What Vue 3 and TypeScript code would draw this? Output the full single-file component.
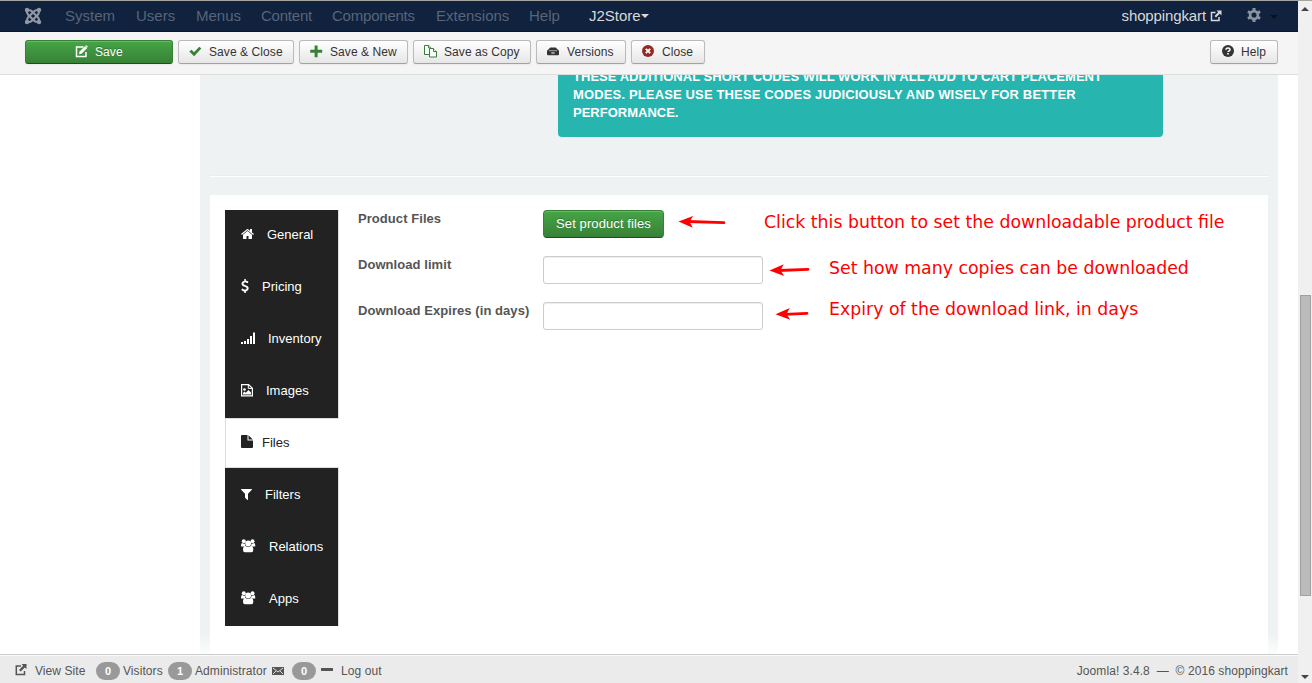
<script setup lang="ts">
interface MenuItem {
  label: string
  step: number
  tight?: boolean
}
interface ToolButton {
  label: string
  icon: string
  width: number
}
interface Tab {
  label: string
  icon: string
  active?: boolean
}
interface Callout {
  text: string
  x: number
  y: number
  tip: [number, number]
  tail: [number, number]
}

const menus: MenuItem[] = [
  { label: 'System', step: 71 },
  { label: 'Users', step: 60 },
  { label: 'Menus', step: 65 },
  { label: 'Content', step: 71, tight: true },
  { label: 'Components', step: 104, tight: true },
  { label: 'Extensions', step: 93 },
  { label: 'Help', step: 60 },
]

const tools: ToolButton[] = [
  { label: 'Save', icon: 'edit', width: 148 },
  { label: 'Save & Close', icon: 'check', width: 116 },
  { label: 'Save & New', icon: 'plus', width: 109 },
  { label: 'Save as Copy', icon: 'copy', width: 118 },
  { label: 'Versions', icon: 'archive', width: 90 },
  { label: 'Close', icon: 'cancel', width: 74 },
]

const tabs: Tab[] = [
  { label: 'General', icon: 'home' },
  { label: 'Pricing', icon: 'dollar' },
  { label: 'Inventory', icon: 'signal' },
  { label: 'Images', icon: 'image' },
  { label: 'Files', icon: 'file', active: true },
  { label: 'Filters', icon: 'filter' },
  { label: 'Relations', icon: 'group' },
  { label: 'Apps', icon: 'group' },
]

const callouts: Callout[] = [
  { text: 'Click this button to set the downloadable product file', x: 764, y: 228, tip: [678.5, 221.5], tail: [724, 222.7] },
  { text: 'Set how many copies can be downloaded', x: 829, y: 274, tip: [769.5, 270.5], tail: [808, 269.4] },
  { text: 'Expiry of the download link, in days', x: 829, y: 315, tip: [775.5, 314.3], tail: [807, 313.3] },
]

function headTransform(c: Callout): string {
  const angle = (Math.atan2(c.tail[1] - c.tip[1], c.tail[0] - c.tip[0]) * 180) / Math.PI
  return `translate(${c.tip[0]} ${c.tip[1]}) rotate(${angle})`
}
</script>

<template>
  <div class="screen">
    <div class="page">
      <header class="navbar">
        <svg class="brand" width="18" height="18" viewBox="0 0 18 18">
          <g fill="none" stroke="#9299a5" stroke-width="2.1">
            <path d="M3.200 14.500V12.500q0-1.300 1-2.300l6-6q1.800-1.800 4.500-1" />
            <path d="M14.800 3.500V5.500q0 1.300-1 2.300l-6 6q-1.800 1.800-4.500 1" />
            <path d="M3.500 3.200H5.500q1.300 0 2.300 1l6 6q1.800 1.800 1 4.500" />
            <path d="M14.500 14.800H12.500q-1.300 0-2.300-1l-6-6q-1.800-1.800-1-4.500" />
          </g>
          <g fill="#9299a5">
            <circle cx="3" cy="3" r="2.200" /><circle cx="15" cy="3" r="2.200" />
            <circle cx="3" cy="15" r="2.200" /><circle cx="15" cy="15" r="2.200" />
          </g>
        </svg>
        <nav class="menus">
          <span v-for="m in menus" :key="m.label" :class="{ tight: m.tight }" :style="{ width: m.step + 'px' }">{{ m.label }}</span>
        </nav>
        <span class="store">J2Store<i class="caret"></i></span>
        <span class="site">shoppingkart</span>
        <svg class="site-icon" width="12" height="12" viewBox="0 0 12 12">
          <path d="M5.500 2.500H1.500v8h7.500V7" fill="none" stroke="#d5d8dd" stroke-width="1.500" />
          <path d="M6.500 .5H11.500V5.500L9.800 3.800 6 7.600 4.500 6.100 8.200 2.300Z" fill="#d5d8dd" />
        </svg>
        <svg class="gear" width="14" height="14" viewBox="0 0 14 14">
          <circle cx="7" cy="7" r="3.900" fill="none" stroke="#8c93a0" stroke-width="2.700" />
          <path d="M7 0v2.500M7 11.500V14M.9 3.500l2.200 1.200M10.900 9.300l2.200 1.200M.9 10.500l2.200-1.200M10.900 4.700l2.200-1.200" stroke="#8c93a0" stroke-width="3" />
        </svg>
        <i class="caret dark"></i>
      </header>

      <div class="toolbar">
        <button v-for="t in tools" :key="t.label" class="tool" :class="t.icon" :style="{ width: t.width + 'px' }">
          <svg width="14" height="14" viewBox="0 0 14 14">
            <g v-if="t.icon === 'edit'">
              <path d="M8.500 2H1.500v9.500h9.500V7" fill="none" stroke="#fff" stroke-width="1.500" />
              <path d="M4 9.300l.6-2.700L10.200 1l2 2-5.600 5.700Z" fill="#fff" />
              <path d="M10.600.7l.7-.6 1.600 1.700-.7.700Z" fill="#fff" />
            </g>
            <path v-else-if="t.icon === 'check'" d="M.3 6.600L2.600 4.700 5 7.300 10.300 1.800 12.300 3.600 5.100 11.200Z" fill="#378137" />
            <path v-else-if="t.icon === 'plus'" d="M4.600 .6h3v4.200h4.600v3H7.600v4.400h-3V7.800H.2v-3h4.400Z" fill="#378137" />
            <g v-else-if="t.icon === 'copy'" fill="#fff" stroke="#378137">
              <path d="M.5 .5h4.200l2.300 2.300v6.700H.5Z" />
              <path d="M4.600 .5v2.400H7" />
              <path d="M5.500 3.500h4l3 3v5.500h-7Z" />
              <path d="M9.500 3.500v3h3" />
            </g>
            <g v-else-if="t.icon === 'archive'" fill="#333">
              <path d="M3.400 2.500h5.200l3.400 3.300H0Z" />
              <rect x="0" y="5.200" width="12" height="5" rx="1" />
              <path d="M2 5.700h8" stroke="#aaa" stroke-width=".9" />
              <path d="M4.300 8h3.400" stroke="#fff" />
            </g>
            <g v-else>
              <circle cx="6" cy="6" r="6" fill="#942a25" />
              <path d="M3.800 3.800l4.400 4.400M8.200 3.800L3.800 8.200" stroke="#fff" stroke-width="1.900" />
            </g>
          </svg>
          <span>{{ t.label }}</span>
        </button>
        <button class="tool help">
          <svg width="14" height="14" viewBox="0 0 14 14">
            <circle cx="6" cy="6" r="6" fill="#333" />
            <path d="M3.900 4.700q.1-1.800 2.100-1.800t2.100 1.600q0 1-1.200 1.500-.8.300-.8 1.100" fill="none" stroke="#fff" stroke-width="1.500" />
            <rect x="5.200" y="8" width="1.600" height="1.500" fill="#fff" />
          </svg>
          <span>Help</span>
        </button>
      </div>

      <main class="content">
        <section class="panel">
          <div class="alert">
            <span class="line first">THESE ADDITIONAL SHORT CODES WILL WORK IN ALL ADD TO CART PLACEMENT</span>
            <span class="line second">MODES. PLEASE USE THESE CODES JUDICIOUSLY AND WISELY FOR BETTER</span>
            <span class="line">PERFORMANCE.</span>
          </div>
          <hr />
          <div class="card">
            <ul class="tabs">
              <li v-for="t in tabs" :key="t.label" :class="{ active: t.active }">
                <svg v-if="t.icon === 'home'" width="13" height="14" viewBox="64 0 1664 1792" fill="currentColor">
                  <path d="M1472 992v480q0 26-19 45t-45 19h-384v-384h-256v384h-384q-26 0-45-19t-19-45v-480q0-1 .5-3t.5-3l575-474 575 474q1 2 1 6zm223-69l-62 74q-8 9-21 11h-3q-13 0-21-7l-692-577-692 577q-12 8-24 7-13-2-21-11l-62-74q-8-10-7-23.500t11-21.500l719-599q32-26 76-26t76 26l244 204v-195q0-14 9-23t23-9h192q14 0 23 9t9 23v408l219 182q10 8 11 21.500t-7 23.500z" />
                </svg>
                <svg v-else-if="t.icon === 'dollar'" width="8" height="14" viewBox="384 0 1024 1792" fill="currentColor">
                  <path d="M1362 1185q0 153-99.500 263.500t-258.500 136.500v175q0 14-9 23t-23 9h-135q-13 0-22.500-9.500t-9.500-22.500v-175q-66-9-127.500-31t-101.500-44.500-74-48-46.500-37.500-17.500-18q-17-21-2-41l103-135q7-10 23-12 15-2 24 9l2 2q113 99 243 125 37 8 74 8 81 0 142.500-43t61.500-122q0-28-15-53t-33.500-42-58.500-37.500-66-32-80-32.500q-39-16-61.500-25t-61.500-26.500-62.500-31-56.500-35.500-53.500-42.500-43.500-49-35.500-58-21-66.500-8.500-78q0-138 98-242t255-134v-180q0-13 9.500-22.500t22.500-9.500h135q14 0 23 9t9 23v176q57 6 110.500 23t87 33.500 63.500 37.500 39 29 15 14q17 18 5 38l-81 146q-8 15-23 16-14 3-27-7-3-3-14.500-12t-39-26.500-58.500-32-74.500-26-85.500-11.500q-95 0-155 43t-60 111q0 26 8.500 48t29.500 41.500 39.500 33 56 31 60.500 27 70 27.500q53 20 81 31.500t76 35 75.500 42.500 62 50 53 63.500 31.500 76.500 13 94z" />
                </svg>
                <svg v-else-if="t.icon === 'signal'" width="14" height="14" viewBox="0 0 14 14" fill="currentColor">
                  <path d="M0 11h2v2H0ZM3 10h2v3H3ZM6 8h2v5H6ZM9 5h2v8H9ZM12 1.500h2V13h-2Z" />
                </svg>
                <svg v-else-if="t.icon === 'image'" width="12" height="14" viewBox="0 0 12 14">
                  <path d="M.6 1.600h7l3.800 3.600v7.700H.6Z" fill="none" stroke="currentColor" stroke-width="1.200" />
                  <path d="M7.300 1.600v3.800h4" fill="none" stroke="currentColor" />
                  <circle cx="3.500" cy="6.500" r="1.300" fill="currentColor" />
                  <path d="M2 11.500V10l1.500-1.500 1.300 1.200L7.500 7 10 9.500v2Z" fill="currentColor" />
                </svg>
                <svg v-else-if="t.icon === 'file'" width="12" height="14" viewBox="0 0 12 14" fill="currentColor">
                  <path d="M0 1q0-1 1-1h5.500v5.500H12V12q0 1-1 1H1q-1 0-1-1Z" />
                  <path d="M7.500 .2L11.800 4.500H7.500Z" />
                </svg>
                <svg v-else-if="t.icon === 'filter'" width="11" height="14" viewBox="192 0 1408 1792" fill="currentColor">
                  <path d="M1595 295q17 41-14 70l-493 493v742q0 42-39 59-13 5-25 5-27 0-45-19l-256-256q-19-19-19-45v-486l-493-493q-31-29-14-70 17-39 59-39h1280q42 0 59 39z" />
                </svg>
                <svg v-else width="15" height="14" viewBox="0 0 15 14" fill="currentColor">
                  <circle cx="2.800" cy="2.300" r="2" /><circle cx="11.500" cy="2.300" r="2" />
                  <circle cx="7.150" cy="4.500" r="2.900" />
                  <path d="M0 6.900Q0 4 1.300 4.100q1.500 1 2.500.3 0 1.900 1 3H1.500Q0 7.900 0 6.900ZM14.300 6.900q0-2.900-1.300-2.800-1.500 1-2.500.3 0 1.900-1 3h3.300q1.500.5 1.500-.5Z" />
                  <path d="M2 11q0-4 2.300-3.900 2.850 1.800 5.700 0 2.300-.1 2.300 3.900 0 2.200-2 2.200H4q-2 0-2-2.200Z" />
                </svg>
                <span>{{ t.label }}</span>
              </li>
            </ul>
            <form class="form" @submit.prevent>
              <div class="row">
                <label>Product Files</label>
                <button class="set-files">Set product files</button>
              </div>
              <div class="row">
                <label>Download limit</label>
                <input type="text" />
              </div>
              <div class="row">
                <label>Download Expires (in days)</label>
                <input type="text" />
              </div>
            </form>
          </div>
        </section>
      </main>

      <footer class="status">
        <svg class="view-icon" width="12" height="12" viewBox="0 0 12 12">
          <path d="M6 2H1.300v8.500H9.500V7" fill="none" stroke="#555" stroke-width="1.500" />
          <path d="M6.500 0H11.500V5L9.800 3.500 5.700 7.600 4 5.900 8.100 1.800Z" fill="#555" />
        </svg>
        <span class="view">View Site</span>
        <b class="badge">0</b><span class="visitors">Visitors</span>
        <b class="badge">1</b><span class="admins">Administrator</span>
        <svg class="mail" width="12" height="8" viewBox="0 0 12 8">
          <rect width="12" height="8" fill="#555" />
          <path d="M1 1l5 4 5-4M1 7l3-3M11 7L8 4" fill="none" stroke="#ebebeb" stroke-width=".9" />
        </svg>
        <b class="badge">0</b><i class="minus"></i>
        <span>Log out</span>
        <span class="version">Joomla! 3.4.8 &nbsp;—&nbsp; © 2016 shoppingkart</span>
      </footer>
    </div>

    <aside class="scrollbar">
      <i class="up"></i>
      <div class="thumb"></div>
      <i class="down"></i>
    </aside>

    <svg class="callouts" width="1312" height="683" viewBox="0 0 1312 683">
      <g v-for="c in callouts" :key="c.text">
        <line :x1="c.tip[0] + 9" :y1="c.tip[1]" :x2="c.tail[0]" :y2="c.tail[1]" stroke="#f00" stroke-width="2.800" stroke-linecap="round" />
        <path d="M0 0L14.500-5.800 11 0 14.500 5.800Z" :transform="headTransform(c)" fill="#f00" />
        <text :x="c.x" :y="c.y">{{ c.text }}</text>
      </g>
    </svg>
  </div>
</template>

<style>
body {
  margin: 0;
  overflow: hidden;
}
</style>

<style scoped>
.screen {
  position: relative;
  display: flex;
  box-sizing: border-box;
  width: 1312px;
  height: 683px;
  border-top: 1px solid #a5a5a0;
  background: #fff;
  font: 13px/18px "Liberation Sans", Arial, sans-serif;
  color: #333;
  overflow: hidden;
}
.page {
  display: flex;
  flex-direction: column;
  width: 1298px;
}
.navbar {
  display: flex;
  align-items: center;
  box-sizing: border-box;
  height: 31px;
  padding: 0 20px 0 24px;
  background: #10223e;
  border-bottom: 1px solid #0b182c;
  font-size: 15px;
  line-height: 30px;
  color: #d9d9d9;
}
.brand {
  margin-right: 23px;
  margin-top: -1px;
}
.menus {
  display: flex;
  color: #58647a;
}
.tight {
  letter-spacing: -0.22px;
}
.store {
  display: flex;
  align-items: center;
}
.caret {
  border: 4px solid transparent;
  border-top-color: #d9d9d9;
  border-bottom: 0;
}
.caret.dark {
  margin-left: 9px;
  border-top-color: #07101e;
  margin-top: 2px;
}
.site {
  margin-left: auto;
  letter-spacing: -0.12px;
}
.site-icon {
  margin-left: 4px;
}
.gear {
  margin-left: 25px;
  margin-top: -2px;
}
.toolbar {
  display: flex;
  gap: 5px;
  box-sizing: border-box;
  height: 43px;
  padding: 8px 20px 0 25px;
  background: #f5f5f5;
  border-bottom: 1px solid #ddd;
}
.tool {
  display: flex;
  align-items: center;
  gap: 6px;
  box-sizing: border-box;
  height: 24px;
  margin: 0;
  padding: 0 0 0 10px;
  border: 1px solid #bbb;
  border-bottom-color: #a2a2a2;
  border-radius: 3px;
  background: linear-gradient(#fff, #e6e6e6);
  box-shadow: inset 0 1px 0 rgba(255, 255, 255, 0.2), 0 1px 2px rgba(0, 0, 0, 0.05);
  font: 12px/22px "Liberation Sans", Arial, sans-serif;
  letter-spacing: 0.08px;
  color: #333;
  white-space: nowrap;
}
.tool.edit {
  padding-left: 49px;
  border-color: #378137;
  border-bottom-color: #204b20;
  background: linear-gradient(#46a546, #378137);
  color: #fff;
  text-shadow: 0 -1px 0 rgba(0, 0, 0, 0.25);
}
.tool.help {
  width: 68px;
  padding-left: 11px;
  gap: 5px;
  margin-left: auto;
}
.content {
  height: 579px;
  padding: 0 20px 0 200px;
  overflow: hidden;
}
.panel {
  display: flex;
  flex-direction: column;
  box-sizing: border-box;
  height: 579px;
  padding: 0 10px;
  background: linear-gradient(#eef2f3 558px, #fcfdfd 579px);
}
.alert {
  box-sizing: border-box;
  width: 605px;
  height: 69px;
  margin: -7px 0 39px 348px;
  padding: 0 0 0 15px;
  border-radius: 0 0 4px 4px;
  background: #27b5af;
  color: #fff;
  font-weight: bold;
  white-space: nowrap;
}
.line {
  display: block;
}
.line.first {
  letter-spacing: 0.03px;
}
.line.second {
  letter-spacing: 0.145px;
}
hr {
  width: 100%;
  height: 0;
  margin: 0;
  border: 0;
  border-top: 1px solid #e9edee;
  border-bottom: 1px solid #fff;
  position: relative;
  top: -1px;
}
.card {
  display: flex;
  flex: 1;
  margin-top: 17px;
  padding: 15px;
  background: #fff;
}
.tabs {
  width: 113px;
  height: 416px;
  margin: 0 20px 0 0;
  padding: 0;
  background: #222;
  box-shadow: 1px 0 0 #ddd;
  list-style: none;
  color: #fff;
}
.tabs li {
  display: flex;
  align-items: center;
  gap: 13px;
  box-sizing: border-box;
  height: 52px;
  padding: 0 0 4px 16px;
}
.tabs li span {
  padding-top: 2px;
}
.tabs li.active {
  gap: 9px;
  width: 114px;
  height: 50px;
  margin-bottom: 2px;
  padding: 0 0 2px 15px;
  border: 1px solid #ddd;
  border-right: 0;
  background: #fff;
  color: #222;
}
.form {
  display: flex;
  flex-direction: column;
  gap: 18px;
}
.row {
  display: flex;
  height: 28px;
}
label {
  width: 185px;
  font-weight: bold;
  letter-spacing: 0.06px;
  color: #555;
}
input {
  box-sizing: border-box;
  width: 220px;
  height: 28px;
  border: 1px solid #ccc;
  border-radius: 3px;
  background: #fff;
  box-shadow: inset 0 1px 1px rgba(0, 0, 0, 0.075);
}
.set-files {
  width: 121px;
  height: 28px;
  padding: 0;
  border: 1px solid #378137;
  border-bottom-color: #204b20;
  border-radius: 4px;
  background: linear-gradient(#46a546, #378137);
  box-shadow: inset 0 1px 0 rgba(255, 255, 255, 0.2);
  color: #fff;
  font: 13px/18px "Liberation Sans", Arial, sans-serif;
  letter-spacing: 0.1px;
  text-shadow: 0 -1px 0 rgba(0, 0, 0, 0.25);
}
.status {
  display: flex;
  align-items: center;
  box-sizing: border-box;
  height: 29px;
  padding: 3px 10px 0 15px;
  border-top: 1px solid #ccc;
  background: #ebebeb;
  box-shadow: inset 0 1px 0 #fafafa;
  font-size: 12px;
  letter-spacing: 0.08px;
  color: #555;
  white-space: nowrap;
}
.view-icon {
  margin-right: 8px;
  margin-top: -2px;
}
.view {
  width: 61px;
}
.badge {
  width: 24px;
  height: 18px;
  margin-right: 3px;
  border-radius: 9px;
  background: #999;
  color: #fff;
  font-size: 11px;
  line-height: 18px;
  text-align: center;
}
.visitors {
  width: 45px;
}
.admins {
  width: 77px;
}
.mail {
  margin-right: 8px;
}
.minus {
  width: 12px;
  height: 3px;
  margin: -2px 8px 0 2px;
  background: #555;
}
.version {
  margin-left: auto;
}
.scrollbar {
  display: flex;
  flex-direction: column;
  align-items: center;
  width: 14px;
  background: #f0f0f0;
}
.up {
  margin-top: 6px;
  border: 4px solid transparent;
  border-bottom-color: #444;
  border-top: 0;
}
.thumb {
  box-sizing: border-box;
  width: 11px;
  height: 301px;
  margin: 284px 0 auto 1px;
  border: 1px solid #a0a0a0;
  background: #bbb;
}
.down {
  margin-bottom: 4px;
  border: 4px solid transparent;
  border-top-color: #444;
  border-bottom: 0;
}
.callouts {
  position: absolute;
  left: 0;
  top: -1px;
  pointer-events: none;
}
.callouts text {
  font: 17.33px "DejaVu Sans", sans-serif;
  fill: #f00;
}
</style>
